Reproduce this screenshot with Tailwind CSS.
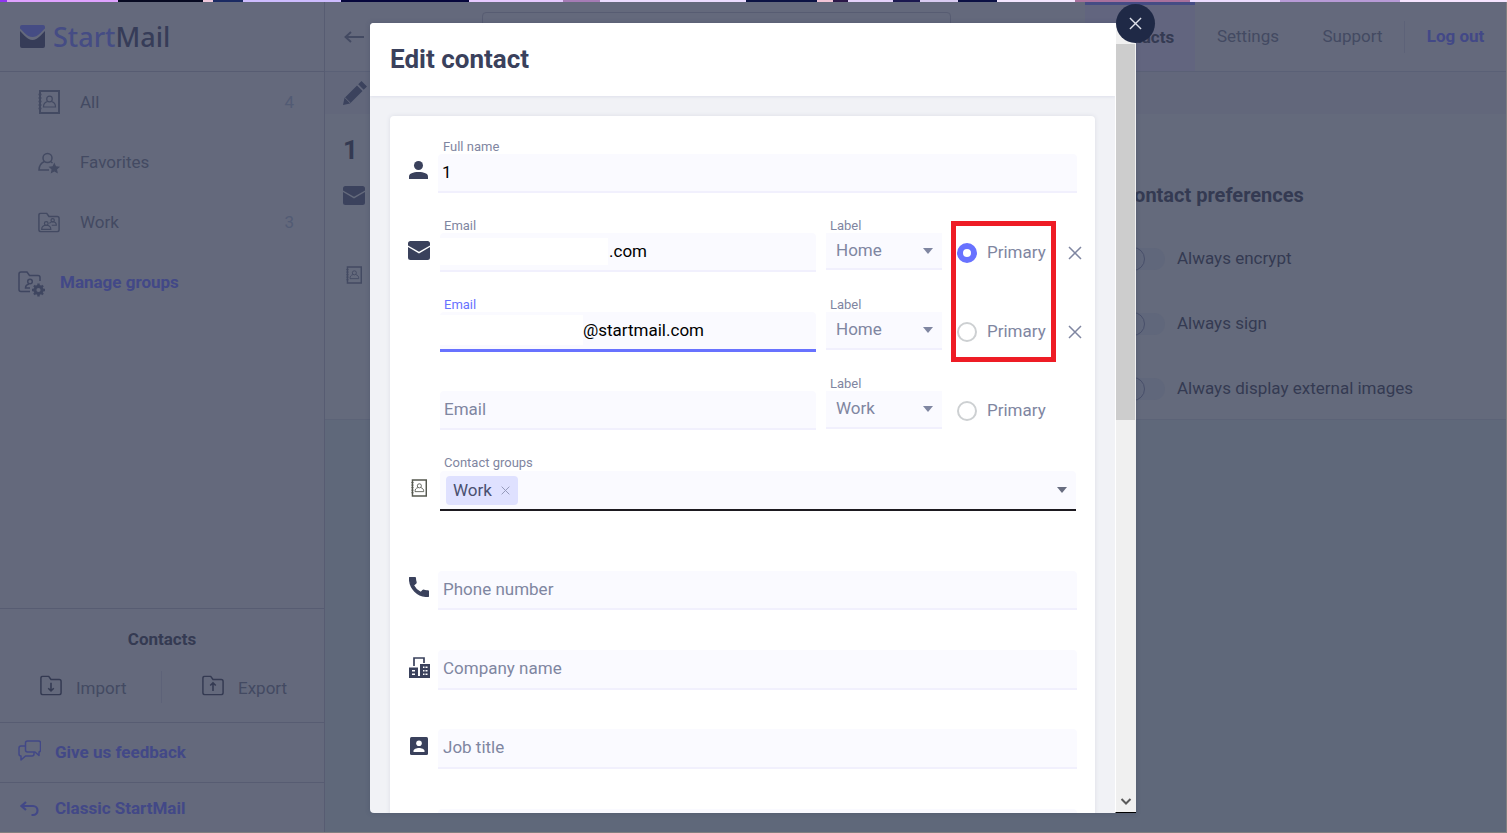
<!DOCTYPE html>
<html lang="en">
<head>
<meta charset="utf-8">
<meta name="viewport" content="width=device-width, initial-scale=1">
<title>StartMail - Edit contact</title>
<script src="https://cdn.jsdelivr.net/npm/@tailwindcss/browser@4"></script>
</head>
<body class="relative flex h-screen flex-col overflow-hidden bg-[#5f687a] font-['Roboto',sans-serif] text-[17px] text-[#434a62]">

<svg class="hidden" aria-hidden="true">
  <symbol id="envelope" viewBox="0 0 22 19">
    <path d="M2.500 0h17A2.500 2.500 0 0 1 22 2.500v2L11 10.800 0 4.500v-2A2.500 2.500 0 0 1 2.500 0z"/>
    <path d="M0 6l11 6.400L22 6V16.500a2.500 2.500 0 0 1-2.500 2.500h-17A2.500 2.500 0 0 1 0 16.500z"/>
  </symbol>
  <symbol id="book" viewBox="0 0 22 24">
    <path fill="none" stroke="currentColor" stroke-width="2" d="M2 1h19v22H2z"/>
    <path fill="none" stroke="currentColor" stroke-width="1.300" d="M.5 4.500h3M.5 8h3M.5 11.500h3M.5 15h3M.5 18.500h3"/>
    <path fill="none" stroke="currentColor" stroke-width="1.200" d="M9.500 11.500c-3 .8-4 2.500-4 5.500h12c0-3-1-4.700-4-5.500"/>
    <circle fill="none" stroke="currentColor" stroke-width="1.200" cx="11.500" cy="9" r="2.800"/>
  </symbol>
  <symbol id="cross" viewBox="0 0 14 14">
    <path fill="none" stroke="currentColor" stroke-width="1.500" d="M1 1l12 12M13 1L1 13"/>
  </symbol>
  <symbol id="folder" viewBox="0 0 24 22">
    <path fill="none" stroke="currentColor" stroke-width="1.600" stroke-linejoin="round" d="M3 1h6.500l2.500 3.500h9a2 2 0 0 1 2 2V19a2 2 0 0 1-2 2H3a2 2 0 0 1-2-2V3a2 2 0 0 1 2-2z"/>
  </symbol>
</svg>

<div class="h-[2px] shrink-0 bg-[linear-gradient(90deg,#8f35f0_0_7px,#dfa2ff_7px_118px,#070a22_118px_203px,#f0c8dc_203px_213px,#1b2a63_213px_243px,#cdbcff_243px_341px,#06063c_341px_469px,#e6c9ff_469px_563px,#a57bb5_563px_600px,#ecdcff_600px_746px,#0b1244_746px_817px,#f2c4d6_817px_833px,#2b1748_833px_848px,#e5d2fb_848px_893px,#1b1850_893px_920px,#d9cbf2_920px_958px,#0b1044_958px_997px,#f4e6ff_997px_1075px,#a8709c_1075px_1190px,#ecdcff_1190px_1280px,#b79ad6_1280px_1400px,#f6e4ff_1400px)]"></div>

<div class="flex min-h-0 flex-1 border-r border-b border-[#817f80]">
  <!-- Sidebar -->
  <aside class="flex w-[325px] shrink-0 flex-col border-r border-[#575c72] bg-[#64697c]">
    <div class="flex h-[70px] items-center gap-2 border-b border-[#575c72] pl-5">
      <svg class="h-[23px] w-[25px]" viewBox="0 0 25 23" aria-hidden="true">
        <path fill="#454c84" d="M2 0h21a2 2 0 0 1 2 2v1.500c-4 3.500-7 8.500-12.500 8.500S4 7 0 3.500V2a2 2 0 0 1 2-2z"/>
        <path fill="#363c58" d="M0 6c4 3.500 7 9 12.500 9S21 9.500 25 6v15a2 2 0 0 1-2 2H2a2 2 0 0 1-2-2z"/>
      </svg>
      <span class="font-['Noto_Sans',sans-serif] text-[27px] leading-[36px] font-medium text-[#363c58]"><span class="text-[#454c84]">Start</span>Mail</span>
    </div>
    <nav class="flex flex-col pt-px">
      <a href="#" class="flex h-[60px] items-center pr-[30px] pl-[38px]">
        <svg class="mr-5 mb-[2px] h-6 w-[22px]" aria-hidden="true"><use href="#book"/></svg>All
        <span class="ml-auto text-[#525b74]">4</span>
      </a>
      <a href="#" class="flex h-[60px] items-center pr-[30px] pl-[38px]">
        <svg class="mr-5 h-[22px] w-[22px]" viewBox="0 0 22 22" aria-hidden="true">
          <circle cx="9.500" cy="6" r="4.500" fill="none" stroke="currentColor" stroke-width="1.500"/>
          <path d="M6.500 9.500C3 11 1 13 1 18h10M12.500 9.500l2 1.500" fill="none" stroke="currentColor" stroke-width="1.500"/>
          <path fill="currentColor" d="M16.300 10.500l1.700 3.800 4 .4-3 2.700.9 4.100-3.600-2.100-3.600 2.100.9-4.100-3-2.700 4-.4z"/>
        </svg>Favorites
      </a>
      <a href="#" class="flex h-[60px] items-center pr-[30px] pl-[38px]">
        <svg class="mr-5 mb-[2px] h-[21px] w-[22px]" viewBox="0 0 24 22" fill="none" stroke="currentColor" stroke-width="1.300" aria-hidden="true">
          <use href="#folder"/>
          <circle cx="9" cy="12" r="2"/><path d="M4 18.500c0-3 2-4.500 5-4.500s5 1.500 5 4.500z"/>
          <circle cx="16" cy="8.500" r="1.800"/><path d="M12.500 12c1-1.500 2-1.800 3.500-1.800 2.500 0 4 1.300 4 3.800h-5"/>
        </svg>Work
        <span class="ml-auto text-[#525b74]">3</span>
      </a>
      <a href="#" class="flex h-[60px] items-center pl-[18px] font-bold text-[#424887]">
        <svg class="mt-[2px] mr-[14px] h-[26px] w-7 text-[#3f4660]" viewBox="0 0 28 26" fill="none" stroke="currentColor" stroke-width="1.500" aria-hidden="true">
          <path d="M12 20.500H3a2 2 0 0 1-2-2V3a2 2 0 0 1 2-2h6l2.500 3.500H20a2 2 0 0 1 2 2V10"/>
          <circle cx="12" cy="10.500" r="2.300"/><path d="M11 13c-2.500.7-3.500 2-3.500 4h4.500"/>
          <circle cx="20.500" cy="19" r="3.600" stroke-width="3"/>
          <path stroke-width="2.400" d="M20.500 12.500v3M20.500 22.500v3M14 19h3M24 19h3M16 14.500l2 2M23 21.500l2 2M25 14.500l-2 2M18 21.500l-2 2"/>
        </svg>Manage groups
      </a>
    </nav>
    <div class="mt-auto h-[114px] border-t border-[#575c72] pt-[18px]">
      <h2 class="text-center leading-6 font-bold text-[#343a52]">Contacts</h2>
      <div class="mt-5 flex items-center">
        <a href="#" class="flex h-8 w-1/2 items-center gap-[14px] border-r border-[#5d6278] pl-[40px]">
          <svg class="mb-1 h-[21px] w-[22px] text-[#343a52]" viewBox="0 0 24 22" aria-hidden="true"><use href="#folder"/><path d="M12 8v9M9 14l3 3 3-3" fill="none" stroke="currentColor" stroke-width="1.700"/></svg><span class="pt-[3px]">Import</span>
        </a>
        <a href="#" class="flex h-8 w-1/2 items-center gap-[14px] pl-[40px]">
          <svg class="mb-1 h-[21px] w-[22px] text-[#343a52]" viewBox="0 0 24 22" aria-hidden="true"><use href="#folder"/><path d="M12 17V8M9 11l3-3 3 3" fill="none" stroke="currentColor" stroke-width="1.700"/></svg><span class="pt-[3px]">Export</span>
        </a>
      </div>
    </div>
    <a href="#" class="flex h-[60px] items-center gap-[14px] border-t border-[#575c72] pl-[18px] font-bold text-[#424887]">
      <svg class="mb-1 h-[22px] w-[23px]" viewBox="0 0 23 22" fill="none" stroke="currentColor" stroke-width="1.500" stroke-linejoin="round" aria-hidden="true">
        <path d="M9.500 1h11a2 2 0 0 1 2 2v7a2 2 0 0 1-1.500 2v3.500L17 12H9.500a2 2 0 0 1-2-2V3a2 2 0 0 1 2-2z"/>
        <path d="M7.500 6H3a2 2 0 0 0-2 2v6a2 2 0 0 0 2 2v4l4.500-4H14a2 2 0 0 0 2-2v-2"/>
      </svg>Give us feedback
    </a>
    <a href="#" class="flex h-[50px] items-center gap-4 border-t border-[#575c72] pt-[2px] pl-5 font-bold text-[#424887]">
      <svg class="h-4 w-[19px]" viewBox="0 0 19 16" fill="none" stroke="currentColor" stroke-width="2.200" aria-hidden="true"><path d="M6 1L1.500 5 6 9M1.500 5H13a4.500 4.500 0 0 1 0 9h-1.500"/></svg>Classic StartMail
    </a>
  </aside>

  <!-- Contact page behind the dialog -->
  <main class="min-w-0 flex-1">
    <header class="flex h-[70px] border-b border-[#5a6076] bg-[#64697c]">
      <a href="#" aria-label="Back" class="ml-[19px] flex items-center">
        <svg class="h-3 w-5" viewBox="0 0 20 12" fill="none" stroke="currentColor" stroke-width="1.900" aria-hidden="true"><path d="M20 6H1.500M7 1L1.500 6 7 11"/></svg>
      </a>
      <input type="search" aria-label="Search contacts" class="mt-[10px] mr-[134px] ml-[118px] h-[50px] min-w-0 flex-1 rounded-[4px] border border-[#575c72]">
      <nav class="flex h-[69px] items-center">
        <a href="#" class="flex h-full w-[110px] items-center justify-center border-t-[3px] border-[#454c84] bg-[#62657f] font-bold text-[#343a52]">Contacts</a>
        <a href="#" class="w-[106px] text-center">Settings</a>
        <a href="#" class="w-[103px] text-center">Support</a>
        <a href="#" class="flex h-8 w-[102px] items-center justify-center border-l border-[#5d6278] font-bold text-[#424887]">Log out</a>
      </nav>
    </header>
    <div class="flex h-[42px] items-center bg-[#62677b] pl-[18px]">
      <button type="button" aria-label="Edit">
        <svg class="size-6" viewBox="0 0 24 24" fill="#3b425d" aria-hidden="true"><path d="M0 24l1.500-7L14 4.500l5.500 5.500L7 22.500zM15.200 3.300L18.500 0 24 5.500l-3.300 3.300z"/><path d="M1.800 16.500l5.700 5.700" stroke="#64697c" stroke-width="1"/></svg>
      </button>
    </div>
    <section class="flex h-[306px] justify-between border-b border-[#5c6377] bg-[#646a7c] pl-[18px]">
      <div>
        <h1 class="mt-5 text-[26px] leading-8 font-bold text-[#343a52]">1</h1>
        <svg class="mt-5 h-[19px] w-[22px] fill-[#3b425d]" aria-hidden="true"><use href="#envelope"/></svg>
        <svg class="mt-[61px] ml-[3px] h-[18px] w-4" aria-hidden="true"><use href="#book"/></svg>
      </div>
      <div class="w-[385px] text-[#343a52]">
        <h2 class="mt-[67px] text-[20px] leading-7 font-bold">Contact preferences</h2>
        <div class="mt-[38px] flex flex-col gap-[41px]">
          <label class="flex h-6 items-center gap-3"><input type="checkbox" class="sr-only"><span class="flex h-[22px] w-[44px] items-center rounded-full bg-[#60677b]"><span class="size-6 rounded-full border border-[#484f6a]"></span></span>Always encrypt</label>
          <label class="flex h-6 items-center gap-3"><input type="checkbox" class="sr-only"><span class="flex h-[22px] w-[44px] items-center rounded-full bg-[#60677b]"><span class="size-6 rounded-full border border-[#484f6a]"></span></span>Always sign</label>
          <label class="flex h-6 items-center gap-3"><input type="checkbox" class="sr-only"><span class="flex h-[22px] w-[44px] items-center rounded-full bg-[#60677b]"><span class="size-6 rounded-full border border-[#484f6a]"></span></span>Always display external images</label>
        </div>
      </div>
    </section>
  </main>
</div>

<!-- Dialog -->
<div class="absolute inset-0 flex justify-center pt-[23px] pr-px pb-5">
  <div role="dialog" aria-labelledby="dialog-title" class="relative flex w-[766px] rounded-l-[4px] bg-[#f1f2f6] shadow-[0_0_5px_rgba(50,60,85,0.3)]">
    <div class="flex min-w-0 flex-1 flex-col overflow-hidden rounded-l-[4px]">
      <header class="z-10 flex h-[73px] shrink-0 items-center bg-white pb-[2px] pl-5 shadow-[0_1px_3px_#dedfea]">
        <h1 id="dialog-title" class="text-[26px] leading-8 font-bold text-[#3a415c]">Edit contact</h1>
      </header>
      <form class="mx-5 mt-5 rounded-[4px] bg-white pt-[22px] pr-[18px] pl-[18px] text-[#7f86a1] shadow-[0_0_4px_#dadce4]">

        <div class="flex h-[79px]">
          <svg class="mt-[23px] mr-[10px] ml-px h-[18px] w-[19px] shrink-0 fill-[#3a415c]" viewBox="0 0 19 18" aria-hidden="true"><circle cx="9.500" cy="4.500" r="4.500"/><path d="M0 18v-2.500C0 12.500 4 11 9.500 11s9.500 1.500 9.500 4.500V18z"/></svg>
          <div class="flex-1">
            <label for="name" class="block h-4 pl-[5px] text-[13px] leading-[18px]">Full name</label>
            <input id="name" type="text" value="1" class="h-[39px] w-full rounded-t-[4px] border-b-2 border-[#f1f0fd] bg-[#fafaff] px-1 pb-[2px] text-black outline-none">
          </div>
        </div>

        <div class="relative">
          <div class="-mr-[9px] flex h-[79px]">
            <svg class="mt-6 mr-[10px] h-[19px] w-[22px] shrink-0 fill-[#3a415c]" aria-hidden="true"><use href="#envelope"/></svg>
            <div class="relative flex-1">
              <label for="email1" class="block h-4 pl-1 text-[13px] leading-[18px]">Email</label>
              <input id="email1" type="text" value=".com" class="h-[39px] w-full rounded-t-[4px] border-b-2 border-[#f1f0fd] bg-[#fafaff] pb-[2px] pl-[169px] text-black outline-none">
              <span class="absolute top-[21px] left-0 h-[27px] w-[168px] bg-white"></span>
            </div>
            <div class="relative ml-[10px] w-[116px]">
              <label for="label1" class="block h-4 pl-1 text-[13px] leading-[18px]">Label</label>
              <select id="label1" class="h-[37px] w-full appearance-none border-b-2 border-[#f1f0fd] bg-[#fafaff] pl-[10px]"><option>Home</option><option>Work</option></select>
              <span class="pointer-events-none absolute top-[31px] right-[9px] border-x-[5px] border-t-[6px] border-x-transparent border-t-[#7f86a1]"></span>
            </div>
            <label class="mt-[17px] ml-[15px] flex h-[38px] w-[107px] items-center gap-[10px]"><input type="radio" name="primary" checked class="size-5 appearance-none rounded-full border-2 border-[#cdd0d2] bg-white checked:border-[6px] checked:border-[#6872ff]">Primary</label>
            <button type="button" aria-label="Remove email" class="mt-[17px] flex h-[38px] w-[22px] items-center justify-center"><svg class="size-[14px]" aria-hidden="true"><use href="#cross"/></svg></button>
          </div>

          <div class="-mr-[9px] flex h-[79px] pl-8">
            <div class="relative flex-1">
              <label for="email2" class="block h-4 pl-1 text-[13px] leading-[18px] text-[#6872ff]">Email</label>
              <input id="email2" type="text" value="@startmail.com" class="h-10 w-full rounded-t-[4px] border-b-[3px] border-[#6872ff] bg-[#fafaff] pb-[2px] pl-[143px] text-black outline-none">
              <span class="absolute top-[19px] left-0 h-[30px] w-[143px] bg-white"></span>
            </div>
            <div class="relative ml-[10px] w-[116px]">
              <label for="label2" class="block h-4 pl-1 text-[13px] leading-[18px]">Label</label>
              <select id="label2" class="h-[38px] w-full appearance-none border-b-2 border-[#f1f0fd] bg-[#fafaff] pb-px pl-[10px]"><option>Home</option><option>Work</option></select>
              <span class="pointer-events-none absolute top-[31px] right-[9px] border-x-[5px] border-t-[6px] border-x-transparent border-t-[#7f86a1]"></span>
            </div>
            <label class="mt-[17px] ml-[15px] flex h-[38px] w-[107px] items-center gap-[10px]"><input type="radio" name="primary" class="size-5 appearance-none rounded-full border-2 border-[#cdd0d2] bg-white checked:border-[6px] checked:border-[#6872ff]">Primary</label>
            <button type="button" aria-label="Remove email" class="mt-[17px] flex h-[38px] w-[22px] items-center justify-center"><svg class="size-[14px]" aria-hidden="true"><use href="#cross"/></svg></button>
          </div>

          <div class="flex h-[79px] pr-px pl-8">
            <div class="flex-1 pt-4">
              <input type="text" aria-label="Email" placeholder="Email" class="h-[39px] w-full rounded-t-[4px] border-b-2 border-[#f1f0fd] bg-[#fafaff] pb-[2px] pl-1 outline-none placeholder:text-[#7f86a1]">
            </div>
            <div class="relative ml-[10px] w-[116px]">
              <label for="label3" class="block h-4 pl-1 text-[13px] leading-[18px]">Label</label>
              <select id="label3" class="h-[38px] w-full appearance-none border-b-2 border-[#f1f0fd] bg-[#fafaff] pb-px pl-[10px]"><option>Work</option><option>Home</option></select>
              <span class="pointer-events-none absolute top-[31px] right-[9px] border-x-[5px] border-t-[6px] border-x-transparent border-t-[#7f86a1]"></span>
            </div>
            <label class="mt-[17px] ml-[15px] flex h-[38px] w-[119px] items-center gap-[10px]"><input type="radio" name="primary" class="size-5 appearance-none rounded-full border-2 border-[#cdd0d2] bg-white checked:border-[6px] checked:border-[#6872ff]">Primary</label>
          </div>
          <!-- Highlight around the primary choice -->
          <div class="pointer-events-none absolute top-1 right-[21px] h-[141px] w-[105px] border-[5px] border-[#ee1c25]"></div>
        </div>

        <div class="flex h-[101px] pr-px">
          <svg class="mt-[25px] mr-[13px] ml-[3px] h-[18px] w-4 shrink-0 text-[#55584f]" aria-hidden="true"><use href="#book"/></svg>
          <div class="flex-1">
            <label for="groups" class="block h-[17px] pl-1 text-[13px] leading-[18px]">Contact groups</label>
            <div class="flex h-10 items-center rounded-t-[4px] border-b-2 border-[#1d1a20] bg-[#fafaff] pr-[9px] pl-[6px]">
              <span class="flex h-[29px] w-[72px] items-center justify-between rounded-[4px] bg-[#dfe1ff] pt-px pr-2 pl-[7px] text-[#4a5070]">Work <button type="button" aria-label="Remove Work"><svg class="block size-[9px] text-[#9297b8]" aria-hidden="true"><use href="#cross"/></svg></button></span>
              <input id="groups" type="text" class="min-w-0 flex-1 outline-none">
              <span class="border-x-[5px] border-t-[6px] border-x-transparent border-t-[#686d80]"></span>
            </div>
          </div>
        </div>

        <div class="flex h-[79px]">
          <svg class="mt-[22px] mr-[9px] ml-px h-5 w-5 shrink-0 fill-[#3a415c] stroke-[#3a415c]" viewBox="3 3 18 18" aria-hidden="true"><path d="M6.900 10.400c1.440 2.830 3.860 5.240 6.700 6.700l1.900-1.900c.27-.27.670-.36 1.020-.24 1.120.37 2.330.57 3.570.57.40 0 .500.300.500.700V19.600c0 .55-.200.900-.600.900-9.390 0-16.500-7.110-16.500-16.500 0-.4.300-.600.700-.600h3.600c.55 0 .900.200.900.600 0 1.250.2 2.450.57 3.570.11.35.03.740-.25 1.020z" stroke-width="1.200" stroke-linejoin="round"/></svg>
          <div class="flex-1 pt-4"><input type="tel" aria-label="Phone number" placeholder="Phone number" class="h-[39px] w-full rounded-t-[4px] border-b-2 border-[#f1f0fd] bg-[#fafaff] pb-[2px] pl-[5px] outline-none placeholder:text-[#7f86a1]"></div>
        </div>
        <div class="flex h-[79px]">
          <svg class="mt-[23px] mr-2 ml-px h-[21px] w-[21px] shrink-0" viewBox="0 0 21 21" aria-hidden="true">
            <path fill="none" stroke="#3a415c" stroke-width="1.700" d="M5 9V1h10v5"/>
            <path fill="#3a415c" d="M0 10.500h9V19h2V7h10v14H0z"/>
            <path fill="#fff" d="M3 13h3v1.500H3zM3 16.500h3V18H3zM14 9.500h1.500V11H14zM16.500 9.500h2V11h-2zM14 13h1.500v1.500H14zM16.500 13h2v1.500h-2zM14 16.500h1.500V18H14zM16.500 16.500h2V18h-2z"/>
          </svg>
          <div class="flex-1 pt-4"><input type="text" aria-label="Company name" placeholder="Company name" class="h-10 w-full rounded-t-[4px] border-b-2 border-[#f1f0fd] bg-[#fafaff] pb-[3px] pl-[5px] outline-none placeholder:text-[#7f86a1]"></div>
        </div>
        <div class="flex h-[79px]">
          <svg class="mt-6 mr-[10px] ml-[2px] h-[18px] w-[18px] shrink-0" viewBox="0 0 18 18" aria-hidden="true"><rect width="18" height="18" rx="1.500" fill="#3a415c"/><circle cx="9" cy="6.200" r="2.800" fill="#fff"/><path fill="#fff" d="M3.500 15v-1c0-2 3-3 5.500-3s5.500 1 5.500 3v1z"/></svg>
          <div class="flex-1 pt-4"><input type="text" aria-label="Job title" placeholder="Job title" class="h-10 w-full rounded-t-[4px] border-b-2 border-[#f1f0fd] bg-[#fafaff] pb-[3px] pl-[5px] outline-none placeholder:text-[#7f86a1]"></div>
        </div>
        <div class="h-[79px] pt-[17px] pl-[30px]"><div class="h-[39px] rounded-t-[4px] bg-[#fafaff]"></div></div>
      </form>
    </div>

    <!-- Scroll bar -->
    <div class="flex w-[21px] flex-col border-b border-l border-b-black border-l-white bg-[#f0f0f0]" aria-hidden="true">
      <div class="mt-[21px] mr-px h-[376px] bg-[#cdcdcd]"></div>
      <svg class="mt-auto mb-[7px] h-[7px] w-full" viewBox="0 0 20 7" fill="none" stroke="#5a5a5a" stroke-width="2"><path d="M5.500 1l4.500 4.500L14.500 1"/></svg>
    </div>
    <button type="button" aria-label="Close" class="absolute -top-[19px] -right-[19px] flex size-[39px] items-center justify-center rounded-full bg-[#1f2946] text-[#dfe1ea]"><svg class="size-[13px]" aria-hidden="true"><use href="#cross"/></svg></button>
  </div>
</div>
</body>
</html>
